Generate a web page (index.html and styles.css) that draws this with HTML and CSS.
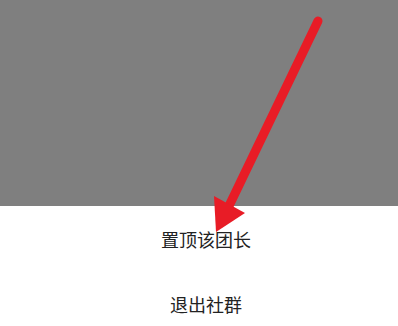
FILE: index.html
```html
<!DOCTYPE html>
<html lang="zh-CN">
<head>
  <meta charset="UTF-8">
  <meta name="viewport" content="width=device-width, initial-scale=1.0">
  <title>社群菜单</title>
  <link rel="stylesheet" href="styles.css">
</head>
<body>
  <!-- Dimmed backdrop above the action sheet -->
  <div class="mask"></div>

  <!-- Action sheet -->
  <ul class="sheet">
    <li class="sheet-item">置顶该团长</li>
    <li class="sheet-item">退出社群</li>
  </ul>

  <!-- Red annotation arrow drawn over the page -->
  <svg class="arrow" width="398" height="326" viewBox="0 0 398 326">
    <line x1="318" y1="21" x2="228" y2="208" stroke="#e81c26" stroke-width="9" stroke-linecap="round"/>
    <polygon points="214,196 245,213 216,232" fill="#e81c26"/>
  </svg>
</body>
</html>
```

FILE: styles.css
```css
/* Basic styling */
body {
  margin: 0;
  padding: 0;
  width: 398px;
  height: 326px;
  overflow: hidden;
  position: relative;
  background: #ffffff;
  font-family: "Noto Sans CJK SC", "Noto Sans", sans-serif;
}

/* Gray backdrop */
.mask {
  height: 206px;
  background-color: #7f7f7f;
}

/* Action sheet list */
.sheet {
  list-style: none;
  margin: 0;
  padding: 0;
}

.sheet-item {
  height: 65px;
  display: flex;
  align-items: center;
  justify-content: center;
  padding-left: 14px;
  font-size: 18px;
  color: #222222;
}

/* Annotation overlay */
.arrow {
  position: absolute;
  left: 0;
  top: 0;
}
```
